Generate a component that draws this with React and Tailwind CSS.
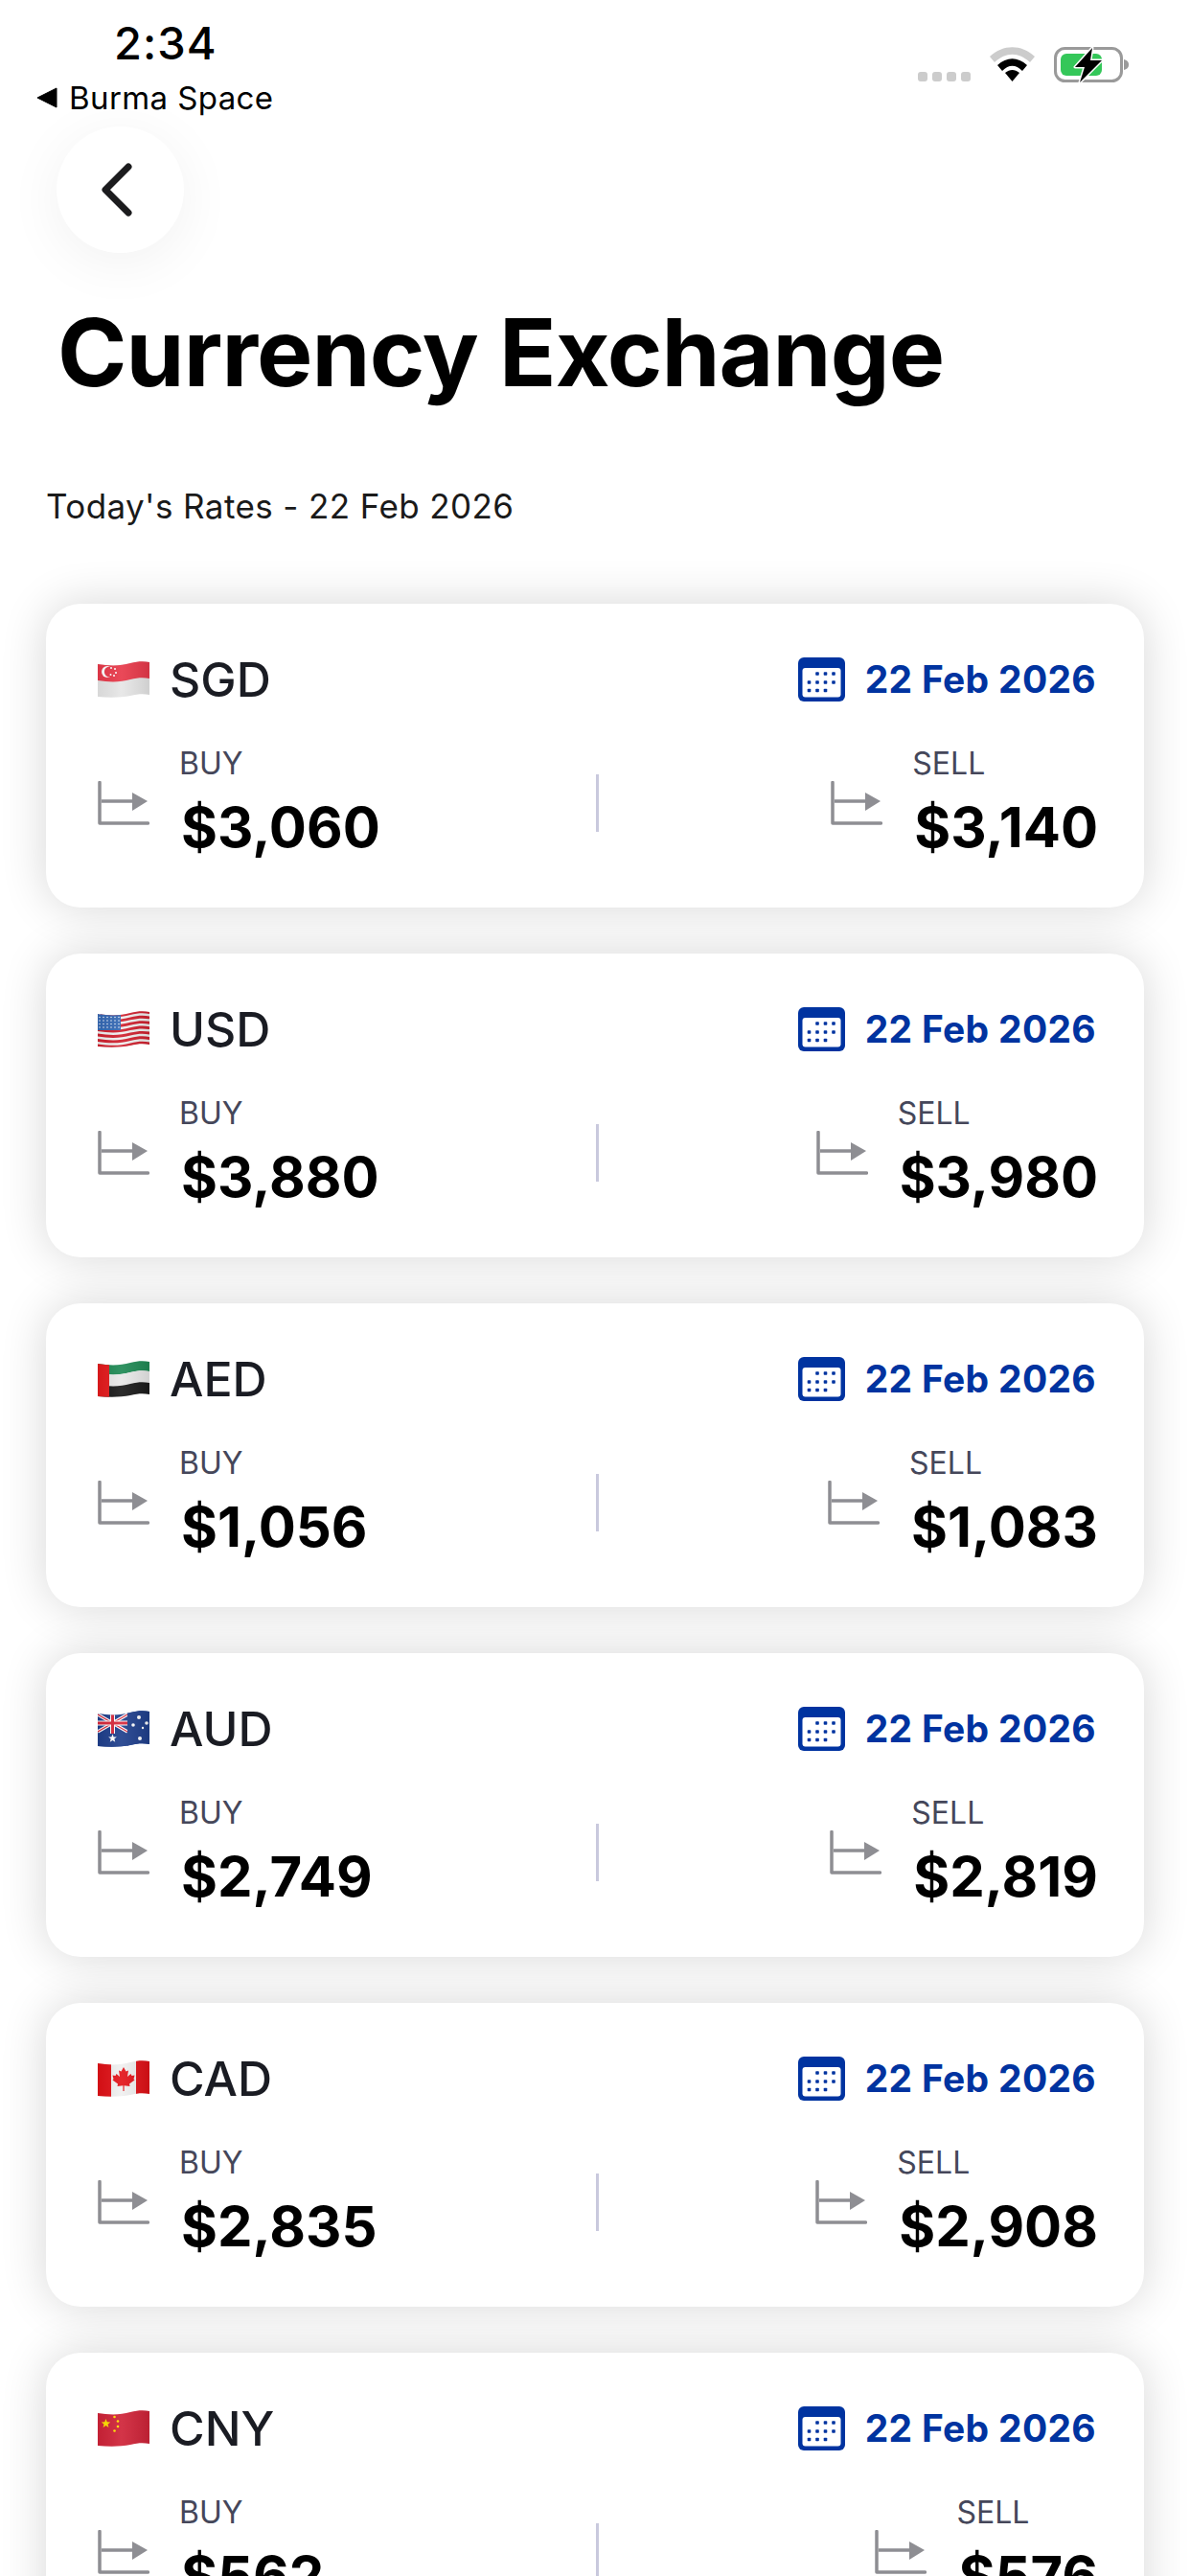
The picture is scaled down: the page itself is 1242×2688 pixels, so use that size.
import React from 'react';

const DATE = '22 Feb 2026';

const rates = [
  { code: 'SGD', flag: 'sg', buy: '$3,060', sell: '$3,140' },
  { code: 'USD', flag: 'us', buy: '$3,880', sell: '$3,980' },
  { code: 'AED', flag: 'ae', buy: '$1,056', sell: '$1,083' },
  { code: 'AUD', flag: 'au', buy: '$2,749', sell: '$2,819' },
  { code: 'CAD', flag: 'ca', buy: '$2,835', sell: '$2,908' },
  { code: 'CNY', flag: 'cn', buy: '$562', sell: '$576' },
];

// wavy band across the flag, y0 to y1
const band = (y0, y1) =>
  `M0 ${y0} C12 ${y0 + 2} 24 ${y0 + 2} 34 ${y0 - 1} C42 ${y0 - 3} 48 ${y0 - 3} 54 ${y0 - 2} L54 ${y1 - 2} C48 ${y1 - 3} 42 ${y1 - 3} 34 ${y1 - 1} C24 ${y1 + 2} 12 ${y1 + 2} 0 ${y1} Z`;

const star = (cx, cy, r) => {
  const pts = [];
  for (let i = 0; i < 10; i++) {
    const a = -Math.PI / 2 + (i * Math.PI) / 5;
    const d = i % 2 ? r * 0.42 : r;
    pts.push(`${(cx + d * Math.cos(a)).toFixed(2)},${(cy + d * Math.sin(a)).toFixed(2)}`);
  }
  return pts.join(' ');
};

const FlagArt = ({ flag }) => {
  if (flag === 'sg') {
    return (
      <>
        <rect width="54" height="40" fill="#e6e6e6" />
        <path d={band(-2, 20)} fill="#e8394a" />
        <circle cx="10" cy="11" r="6" fill="#fff" />
        <circle cx="12.5" cy="11" r="5.6" fill="#e8394a" />
        <circle cx="14" cy="7" r="1" fill="#fff" />
        <circle cx="18" cy="8" r="1" fill="#fff" />
        <circle cx="19" cy="12" r="1" fill="#fff" />
        <circle cx="13.5" cy="14" r="1" fill="#fff" />
        <circle cx="17" cy="15" r="1" fill="#fff" />
      </>
    );
  }
  if (flag === 'us') {
    return (
      <>
        <rect width="54" height="40" fill="#f0f0f0" />
        {[2, 7.4, 12.8, 18.2, 23.6, 29, 34.4].map((y) => (
          <path key={y} d={band(y, y + 2.9)} fill="#d0202e" />
        ))}
        <rect x="0" y="0" width="24" height="20" fill="#3468b4" />
        {[3, 6.5, 10, 13.5, 17].map((y) =>
          [2, 6, 10, 14, 18, 22].map((x) => <circle key={`${x}-${y}`} cx={x} cy={y} r="0.8" fill="#dfe8f5" />)
        )}
      </>
    );
  }
  if (flag === 'ae') {
    return (
      <>
        <path d={band(-2, 13)} fill="#1f8a55" />
        <path d={band(13, 25)} fill="#e8e8e8" />
        <path d={band(25, 42)} fill="#1a1a1a" />
        <rect width="12" height="40" fill="#e41a1c" />
      </>
    );
  }
  if (flag === 'au') {
    return (
      <>
        <rect width="54" height="40" fill="#1f3f8c" />
        <path d="M0 4 L31 22 M31 4 L0 22" stroke="#fff" strokeWidth="3.4" />
        <path d="M0 4 L31 22 M31 4 L0 22" stroke="#d8283c" strokeWidth="1.2" />
        <path d="M15.5 0 V24 M0 13 H31" stroke="#fff" strokeWidth="5" />
        <path d="M15.5 0 V24 M0 13 H31" stroke="#d8283c" strokeWidth="3" />
        <rect y="24" width="32" height="16" fill="#1f3f8c" />
        <rect x="31" width="23" height="40" fill="#1f3f8c" />
        <polygon points={star(15.5, 29, 4.6)} fill="#fff" />
        <circle cx="43" cy="7" r="2" fill="#fff" />
        <circle cx="37" cy="15" r="1.8" fill="#fff" />
        <circle cx="51" cy="13" r="1.8" fill="#fff" />
        <circle cx="47" cy="18" r="1.2" fill="#fff" />
        <circle cx="44" cy="29" r="2" fill="#fff" />
      </>
    );
  }
  if (flag === 'ca') {
    return (
      <>
        <rect width="54" height="40" fill="#f0f0f0" />
        <rect width="14" height="40" fill="#df1016" />
        <rect x="40" width="14" height="40" fill="#df1016" />
        <path
          d="M27 7 L29.5 11.5 L32 10.5 L31 17 L34.5 14 L35.5 16 L38.5 15.5 L37.5 19.5 L38.5 20.5 L33 24.5 L33.5 27 L27.6 26.2 L27.6 32 L26.4 32 L26.4 26.2 L20.5 27 L21 24.5 L15.5 20.5 L16.5 19.5 L15.5 15.5 L18.5 16 L19.5 14 L23 17 L22 10.5 L24.5 11.5 Z"
          fill="#e3141a"
        />
      </>
    );
  }
  return (
    <>
      <rect width="54" height="40" fill="#cf2338" />
      <polygon points={star(8.5, 14, 5)} fill="#ffe000" />
      <circle cx="17.5" cy="7" r="1.3" fill="#ffe000" />
      <circle cx="21" cy="11.5" r="1.3" fill="#ffe000" />
      <circle cx="21" cy="17" r="1.3" fill="#ffe000" />
      <circle cx="17.5" cy="21.5" r="1.3" fill="#ffe000" />
    </>
  );
};

const Flag = ({ flag }) => (
  <svg width="54" height="38" viewBox="0 0 54 38" className="shrink-0">
    <defs>
      <clipPath id={`wave-${flag}`}>
        <path d="M0 3 C12 5 24 5 34 2 C42 0 48 0 54 1 L54 35 C48 34 42 34 34 36 C24 38 12 38 0 37 Z" />
      </clipPath>
      <linearGradient id={`shade-${flag}`} x1="0" y1="0" x2="1" y2="0">
        <stop offset="0" stopColor="#000" stopOpacity="0.06" />
        <stop offset="0.45" stopColor="#fff" stopOpacity="0.08" />
        <stop offset="1" stopColor="#000" stopOpacity="0.1" />
      </linearGradient>
    </defs>
    <g clipPath={`url(#wave-${flag})`}>
      <FlagArt flag={flag} />
      <rect width="54" height="38" fill={`url(#shade-${flag})`} />
    </g>
  </svg>
);

const CalendarIcon = () => (
  <svg width="49" height="46" viewBox="0 0 49 46" className="shrink-0">
    <rect width="49" height="46" rx="6" fill="#0033a0" />
    <rect x="4.5" y="11" width="40" height="30.5" rx="3" fill="#fff" />
    {[
      [20, 17], [28.5, 17], [37, 17],
      [11.5, 26], [20, 26], [28.5, 26], [37, 26],
      [11.5, 34.5], [20, 34.5], [28.5, 34.5],
    ].map(([x, y]) => (
      <rect key={`${x}-${y}`} x={x - 1.8} y={y - 1.8} width="3.6" height="3.6" rx="0.8" fill="#0033a0" />
    ))}
  </svg>
);

const TrendIcon = () => (
  <svg width="54" height="46" viewBox="0 0 54 46" className="shrink-0">
    <path d="M2 1.5 V44 H52.5" fill="none" stroke="#8e8e93" strokeWidth="3.5" strokeLinecap="round" strokeLinejoin="round" />
    <path d="M4 21 H38" stroke="#8e8e93" strokeWidth="3.5" />
    <path d="M36 12 L52 21 L36 31 Z" fill="#8e8e93" />
  </svg>
);

const Rate = ({ label, price }) => (
  <div className="flex items-center gap-[31px]">
    <TrendIcon />
    <div className="flex flex-col">
      <span className="text-[32px] leading-[38px] text-[#45475a]">{label}</span>
      <span className="mt-[12px] -mr-[2px] ml-[2px] text-[58px] leading-[70px] font-bold text-black">{price}</span>
    </div>
  </div>
);

const RateCard = ({ code, flag, buy, sell }) => (
  <div className="h-[317px] shrink-0 rounded-[36px] bg-white pt-[56px] pl-[54px] pr-[50px] shadow-[0_0_48px_rgba(0,0,0,0.16)]">
    <div className="flex items-center justify-between">
      <div className="flex items-center gap-[21px]">
        <Flag flag={flag} />
        <span className="text-[50px] leading-[46px] font-medium text-[#1a1c23]">{code}</span>
      </div>
      <div className="flex items-center gap-[21px]">
        <CalendarIcon />
        <span className="text-[39px] leading-[46px] font-bold tracking-[0.3px] text-[#0033a0]">{DATE}</span>
      </div>
    </div>
    <div className="mt-[46px] grid grid-cols-[1fr_auto_1fr] items-center">
      <div className="flex justify-start"><Rate label="BUY" price={buy} /></div>
      <div className="h-[60px] w-[3px] bg-[#c9c9dd]" />
      <div className="flex justify-end"><Rate label="SELL" price={sell} /></div>
    </div>
  </div>
);

const StatusIcons = () => (
  <div className="flex items-start pt-[49px] pr-[62px]">
    <div className="mt-[26px] flex gap-[5px]">
      {[0, 1, 2, 3].map((i) => (
        <span key={i} className="h-[10px] w-[10px] rounded-[3px] bg-[#cccccc]" />
      ))}
    </div>
    <svg width="47" height="36" viewBox="0 0 47 36" className="ml-[20px]">
      <path d="M0 10 C14 -3 33 -3 47 10 L42 16 C30 5 17 5 5 16 Z" fill="#cccccc" />
      <path d="M8 19 C18 10 29 10 39 19 L34 25 C27 18 20 18 13 25 Z" fill="#000" />
      <path d="M16 27 C21 23 26 23 31 27 L23.5 36 Z" fill="#000" />
    </svg>
    <svg width="80" height="38" viewBox="0 0 80 38" className="ml-[20px]">
      <rect x="1.5" y="1.5" width="69" height="34" rx="10" fill="none" stroke="#9a9a9a" strokeWidth="3" />
      <rect x="7" y="7" width="43" height="23" rx="6" fill="#34c759" />
      <path d="M73 13 C77 14 78 16 78 18.5 C78 21 77 23 73 24 Z" fill="#9a9a9a" />
      <path d="M40 1 L22 21 H32 L27 37 L50 14 H38 Z" fill="#000" stroke="#fff" strokeWidth="3" strokeLinejoin="round" paintOrder="stroke" />
    </svg>
  </div>
);

export default function App() {
  return (
    <div className="flex h-[2688px] w-[1242px] flex-col overflow-hidden bg-white font-['Inter',sans-serif]">
      <div className="flex h-[132px] shrink-0 justify-between">
        <div className="flex flex-col pl-[38px]">
          <span className="mt-[22px] ml-[81px] text-[47px] leading-[46px] font-medium tracking-[1px] text-black">2:34</span>
          <div className="mt-[16px] flex items-center gap-[12px]">
            <svg width="22" height="22" viewBox="0 0 22 22"><path d="M21 1 V21 L1 11 Z" fill="#000" stroke="#000" strokeLinejoin="round" /></svg>
            <span className="text-[33px] leading-[36px] tracking-[0.4px] text-black">Burma Space</span>
          </div>
        </div>
        <StatusIcons />
      </div>

      <button className="ml-[59px] flex h-[132px] w-[133px] shrink-0 items-center justify-center rounded-full bg-white shadow-[0_10px_60px_rgba(0,0,0,0.06)]">
        <svg width="40" height="64" viewBox="0 0 40 64" className="-ml-[8px]">
          <path d="M32 8 L8 32 L32 56" fill="none" stroke="#1c1c1e" strokeWidth="7" strokeLinecap="round" strokeLinejoin="round" />
        </svg>
      </button>

      <h1 className="mt-[42px] ml-[60px] text-[98px] leading-[124px] font-bold tracking-[-0.9px] text-black">Currency Exchange</h1>
      <p className="mt-[76px] ml-[48px] text-[35px] leading-[44px] tracking-[0.4px] text-[#1a1a1a]">Today's Rates - {DATE}</p>

      <div className="mt-[80px] flex flex-col gap-[48px] px-[48px]">
        {rates.map((r) => (
          <RateCard key={r.code} {...r} />
        ))}
      </div>
    </div>
  );
}
